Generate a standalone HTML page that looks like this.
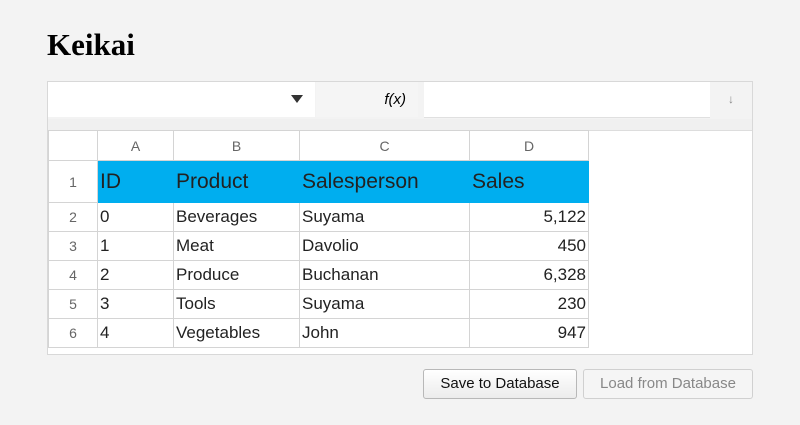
<!DOCTYPE html>
<html><head><meta charset="utf-8"><style>
body{margin:0;width:800px;height:425px;background:#f3f3f3;font-family:"Liberation Sans",sans-serif;position:relative;overflow:hidden}
h1{position:absolute;left:47px;top:27px;margin:0;font:bold 31px "Liberation Serif",serif;color:#000}
.box{position:absolute;left:47px;top:81px;width:704px;height:272px;background:#fff;border:1px solid #d8d8d8}
.a{position:absolute}
table{position:absolute;left:0;top:48px;border-collapse:collapse;font-size:17px;color:#222;table-layout:fixed;width:540px}
td{border:1px solid #d4d4d4;padding:0 2px;white-space:nowrap;height:29px;box-sizing:border-box;overflow:hidden}
td.h{color:#666;text-align:center;font-size:14px}
tr.t td.c{background:#00aeef;font-size:21px;border-color:#00aeef}
.r{text-align:right}
.btn{position:absolute;top:369px;height:30px;border:1px solid #b8b8b8;border-radius:3px;font-size:15px;line-height:28px;text-align:center;box-sizing:border-box}
</style></head><body>
<h1>Keikai</h1>
<div class="box">
 <div class="a" style="left:0;top:0;width:704px;height:37px;background:#f3f3f3"></div>
 <div class="a" style="left:0;top:0;width:267px;height:35px;background:#fff"></div>
 <div class="a" style="left:243px;top:13px;width:0;height:0;border-left:6px solid transparent;border-right:6px solid transparent;border-top:8px solid #333"></div>
 <div class="a" style="left:268px;top:0;width:102px;height:35px;background:#f5f5f5;font-style:italic;font-size:15px;line-height:35px;text-align:right;padding-right:12px;box-sizing:border-box">f(x)</div>
 <div class="a" style="left:376px;top:0;width:286px;height:35px;background:#fff;border-bottom:1px solid #e0e0e0"></div>
 <div class="a" style="left:680px;top:10px;font-size:12px;color:#888">&#8595;</div>
 <div class="a" style="left:0;top:37px;width:704px;height:11px;background:#f0f0f0;border-bottom:1px solid #ddd"></div>
 <table>
  <colgroup><col style="width:49px"><col style="width:76px"><col style="width:126px"><col style="width:170px"><col style="width:119px"></colgroup>
  <tr><td class="h" style="height:30px"></td><td class="h">A</td><td class="h">B</td><td class="h">C</td><td class="h">D</td></tr>
  <tr class="t"><td class="h" style="height:42px">1</td><td class="c">ID</td><td class="c">Product</td><td class="c">Salesperson</td><td class="c">Sales</td></tr>
  <tr><td class="h">2</td><td>0</td><td>Beverages</td><td>Suyama</td><td class="r">5,122</td></tr>
  <tr><td class="h">3</td><td>1</td><td>Meat</td><td>Davolio</td><td class="r">450</td></tr>
  <tr><td class="h">4</td><td>2</td><td>Produce</td><td>Buchanan</td><td class="r">6,328</td></tr>
  <tr><td class="h">5</td><td>3</td><td>Tools</td><td>Suyama</td><td class="r">230</td></tr>
  <tr><td class="h">6</td><td>4</td><td>Vegetables</td><td>John</td><td class="r">947</td></tr>
 </table>
</div>
<div class="btn" style="left:423px;width:154px;background:linear-gradient(#fff,#ececec);color:#111">Save to Database</div>
<div class="btn" style="left:583px;width:170px;background:#f5f5f5;color:#888;border-color:#d0d0d0">Load from Database</div>
</body></html>
